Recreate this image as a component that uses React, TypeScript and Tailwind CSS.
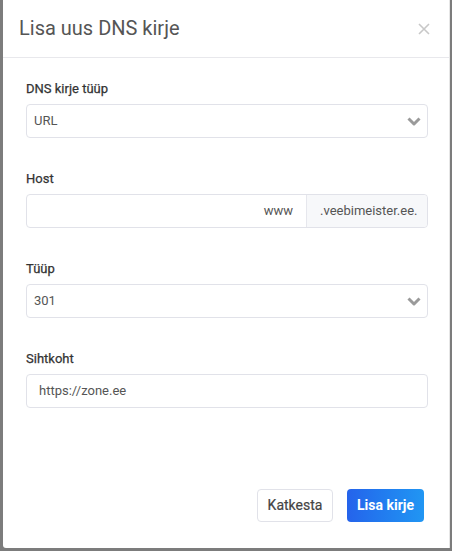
import React from 'react';

function Chevron() {
    return (
        <svg width="14" height="9" viewBox="0 0 14 9" className="text-[#9a9a9a]">
            <polyline points="1.5,1.5 7,7 12.5,1.5" fill="none" stroke="currentColor" strokeWidth="3" strokeLinejoin="round" />
        </svg>
    );
}

function Label({ children }: { children: React.ReactNode }) {
    return <div className="h-5 mb-[5px] text-[13px] leading-5 text-[#333] [-webkit-text-stroke:0.25px_#333]">{children}</div>;
}

function Select({ value }: { value: string }) {
    return (
        <div className="h-[34px] flex items-center justify-between pl-[7px] pr-[6px] border border-[#e1e2e9] rounded-[4px] text-[13px] text-[#555]">
            <span>{value}</span>
            <Chevron />
        </div>
    );
}

export default function App() {
    return (
        <div className="w-[452px] h-[551px] bg-[#7c7c7c] pl-[3px] flex" style={{ fontFamily: 'Roboto, "Liberation Sans", sans-serif' }}>
            <div className="w-[447px] h-[548px] bg-white flex flex-col border-r border-[#e6e6e6] rounded-bl-[3px]">
                <div className="h-[58px] flex items-center justify-between pl-[16px] pr-[19px] border-b border-[#e8e8ec]">
                    <h1 className="text-[20px] text-[#555] pb-[2px]">Lisa uus DNS kirje</h1>
                    <svg width="12" height="12" viewBox="0 0 12 12" className="text-[#c8c8c8]">
                        <path d="M1 1L11 11M11 1L1 11" stroke="currentColor" strokeWidth="1.6" />
                    </svg>
                </div>
                <div className="flex-1 flex flex-col gap-[31px] pt-[21px] pl-[23px] pr-[21px]">
                    <div>
                        <Label>DNS kirje tüüp</Label>
                        <Select value="URL" />
                    </div>
                    <div>
                        <Label>Host</Label>
                        <div className="h-[34px] flex border border-[#e1e2e9] rounded-[4px] text-[13px] text-[#555]">
                            <div className="flex-1 flex items-center justify-end pr-[13px]">www</div>
                            <div className="w-[121px] flex items-center pl-[13px] bg-[#f7f8fa] border-l border-[#e6e7ed] rounded-r-[4px]">.veebimeister.ee.</div>
                        </div>
                    </div>
                    <div>
                        <Label>Tüüp</Label>
                        <Select value="301" />
                    </div>
                    <div>
                        <Label>Sihtkoht</Label>
                        <div className="h-[34px] flex items-center pl-[12px] border border-[#e1e2e9] rounded-[4px] text-[13px] text-[#555]">
                            https://zone.ee
                        </div>
                    </div>
                </div>
                <div className="flex justify-end gap-[14px] pr-[25px] pb-[26px]">
                    <button className="h-[33px] w-[76px] border border-[#e1e2e9] rounded-[4px] text-[14px] text-[#444] [-webkit-text-stroke:0.2px_#444] bg-white">Katkesta</button>
                    <button className="h-[33px] w-[77px] rounded-[4px] text-[14px] font-bold text-white bg-gradient-to-r from-[#2563eb] to-[#2196f3]">Lisa kirje</button>
                </div>
            </div>
        </div>
    );
}
